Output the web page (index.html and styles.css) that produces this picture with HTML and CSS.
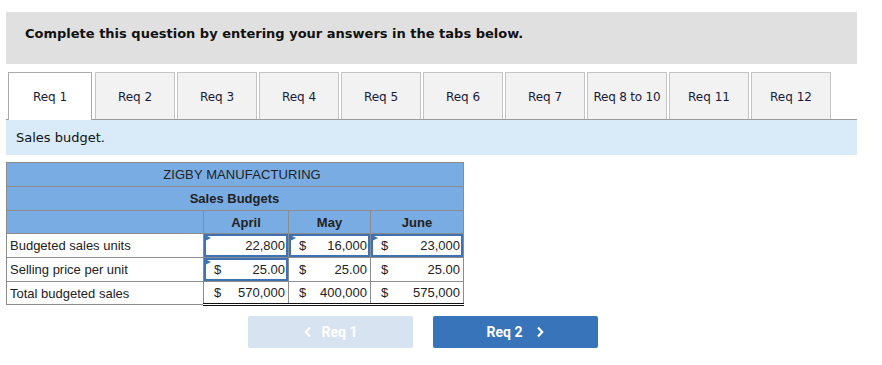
FILE: index.html
```html
<!DOCTYPE html>
<html lang="en">
<head>
  <meta charset="UTF-8">
  <title>Sales budget</title>
  <link rel="stylesheet" href="styles.css">
</head>
<body>
  <div class="banner">Complete this question by entering your answers in the tabs below.</div>

  <div class="tabs">
    <div class="tab active">Req 1</div>
    <div class="tab">Req 2</div>
    <div class="tab">Req 3</div>
    <div class="tab">Req 4</div>
    <div class="tab">Req 5</div>
    <div class="tab">Req 6</div>
    <div class="tab">Req 7</div>
    <div class="tab">Req 8 to 10</div>
    <div class="tab">Req 11</div>
    <div class="tab">Req 12</div>
  </div>

  <div class="prompt">Sales budget.</div>

  <table class="budget">
    <tr class="head"><td colspan="4" class="company">ZIGBY MANUFACTURING</td></tr>
    <tr class="head"><td colspan="4" class="title">Sales Budgets</td></tr>
    <tr class="head months">
      <td></td><td>April</td><td>May</td><td>June</td>
    </tr>
    <tr>
      <td class="label">Budgeted sales units</td>
      <td class="num input"><span></span><span>22,800</span></td>
      <td class="num input"><span>$</span><span>16,000</span></td>
      <td class="num input"><span>$</span><span>23,000</span></td>
    </tr>
    <tr>
      <td class="label">Selling price per unit</td>
      <td class="num input"><span>$</span><span>25.00</span></td>
      <td class="num"><span>$</span><span>25.00</span></td>
      <td class="num"><span>$</span><span>25.00</span></td>
    </tr>
    <tr class="total">
      <td class="label">Total budgeted sales</td>
      <td class="num"><span>$</span><span>570,000</span></td>
      <td class="num"><span>$</span><span>400,000</span></td>
      <td class="num"><span>$</span><span>575,000</span></td>
    </tr>
  </table>

  <div class="nav">
    <button class="step prev" disabled>
      <svg width="8" height="12" viewBox="0 0 8 12"><path d="M6 1.5 1.8 6 6 10.5" fill="none" stroke="currentColor" stroke-width="2.2"/></svg>
      Req 1
    </button>
    <button class="step next">
      Req 2
      <svg width="8" height="12" viewBox="0 0 8 12"><path d="M2 1.5 6.2 6 2 10.5" fill="none" stroke="currentColor" stroke-width="2.2"/></svg>
    </button>
  </div>
</body>
</html>
```

FILE: styles.css
```css
body { margin: 0; padding: 12px 25px 0 6px; font-family: Verdana, "DejaVu Sans", sans-serif; color: #111; background: #fff; }

.banner { background: #e0e0e0; height: 52px; box-sizing: border-box; padding: 14px 0 0 19px; font-size: 13px; font-weight: bold; }

.tabs { display: flex; gap: 2px; margin-top: 8px; padding-left: 2px; border-bottom: 1px solid #9a9a9a; height: 47px; }
.tab { width: 80px; box-sizing: border-box; height: 47px; border: 1px solid #c4c4c4; border-bottom: none; background: #f2f2f2; font-size: 12px; color: #1a1a3a; text-align: center; line-height: 48px; }
.tab:nth-child(8) { letter-spacing: -0.2px; }
.tab.active { width: 84px; background: #fff; border-color: #aaa; height: 48px; margin-right: 1px; position: relative; z-index: 1; }

.prompt { background: #d9eaf8; height: 35px; box-sizing: border-box; padding: 10px 0 0 10px; font-size: 13px; }

.budget { margin-top: 7px; border-collapse: collapse; font-family: Arial, "Liberation Sans", sans-serif; font-size: 13px; color: #222; }
.budget td { border: 1px solid #8c8c8c; height: 23px; padding: 0 3px; }
.budget .head td { background: #79ace3; text-align: center; height: 23px; padding: 0; }
.budget .company { padding-left: 14px !important; letter-spacing: 0.1px; }
.budget .title { font-weight: bold; padding-right: 1px !important; }
.budget .months td { font-weight: bold; height: 22px; }
.budget .months td:nth-child(1) { width: 196px; }
.budget .months td:nth-child(2) { width: 84px; }
.budget .months td:nth-child(3) { width: 81px; }
.budget .months td:nth-child(4) { width: 92px; }
.budget .label { padding-left: 3px; }
.budget .num span { display: inline-block; }
.budget .num span:first-child { width: 18px; padding-left: 7px; }
.budget .num span:last-child { float: right; }
.budget .input { position: relative; box-shadow: inset 0 0 0 2px #3d73b5; }
.budget .input::before { content: ""; position: absolute; left: 1px; top: 1px; border-left: 6px solid #3d73b5; border-top: 3px solid transparent; border-bottom: 3px solid transparent; }
.budget .total td { height: 21px; }
.budget .total td.num { border-bottom: 3px double #111; border-top: 1px solid #111; }

.nav { display: flex; gap: 20px; margin: 10px 0 0 242px; }
.step { width: 165px; height: 32px; border: none; border-radius: 2px; font-family: Roboto, sans-serif; font-weight: bold; font-size: 14px; color: #fff; display: flex; align-items: center; justify-content: center; gap: 10px; }
.step.prev { background: #d8e3f1; }
.step.next { background: #3874b9; gap: 14px; }
```
